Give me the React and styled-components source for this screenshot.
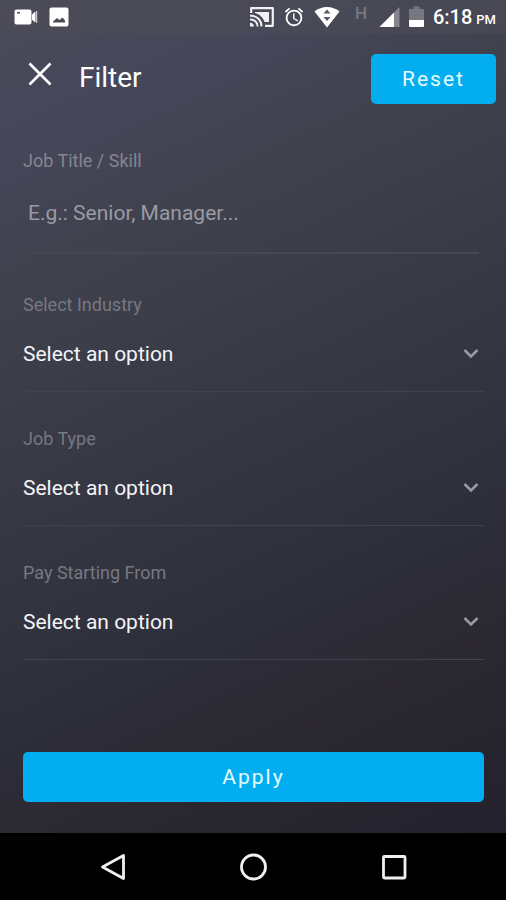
import { useState } from "react";
import styled, { createGlobalStyle } from "styled-components";
import { MdAlarm } from "react-icons/md";

const selects = [
  {
    id: "industry",
    label: "Select Industry",
  },
  {
    id: "job-type",
    label: "Job Type",
  },
  {
    id: "pay",
    label: "Pay Starting From",
  },
];

const emptyFilter = { title: "", industry: "", "job-type": "", pay: "" };

const StatusBar = () => {
  return (
    <StatusWrapper>
      <div className="group">
        <svg width="24" height="18" viewBox="0 0 24 18" fill="#fff">
          <path
            fillRule="evenodd"
            d="M2.500 1.500h13a2 2 0 0 1 2 2v11a2 2 0 0 1-2 2h-13a2 2 0 0 1-2-2v-11a2 2 0 0 1 2-2zM3 4v1.600h3V4z"
          />
          <path d="M18 6.500l2.500-2.500h1v10h-1L18 11.500z" />
          <path d="M22 3h1.200v12H22z" opacity="0.7" />
        </svg>
        <svg width="20" height="20" viewBox="0 0 20 20" fill="#fff">
          <path
            fillRule="evenodd"
            d="M2.500 0.500h15a2 2 0 0 1 2 2v15a2 2 0 0 1-2 2h-15a2 2 0 0 1-2-2v-15a2 2 0 0 1 2-2zM4 15.500h12v-2l-2.500-3-3 2.500-2.500-2-4 3.500z"
          />
        </svg>
      </div>
      <div className="group right">
        <svg width="24" height="20" viewBox="0 0 24 20" fill="none" stroke="#f0f0f2">
          <path d="M1.200 6V1.200h21.600v17.600H15" strokeWidth="2.200" strokeLinejoin="round" />
          <path d="M5 5h14v10h-4.500C13 10.500 9.500 7 5 6z" fill="#f0f0f2" stroke="none" />
          <path d="M0 8.800A10.500 10.500 0 0 1 11.500 19.500M0 12.600A6.800 6.800 0 0 1 7.600 19.500" strokeWidth="1.900" />
          <path d="M0 15.800a4 4 0 0 1 4 3.700H0z" fill="#f0f0f2" stroke="none" />
        </svg>
        <MdAlarm size={22} />
        <svg width="26" height="22" viewBox="0 0 26 22">
          <path d="M0.500 5.500C4 2.500 8.500 1 13 1s9 1.500 12.500 4.500L13 21.500z" fill="#fff" />
          <path d="M13 3.500l3.500 4h-7zM9.500 11h7L13 15z" fill="#5a5a64" />
        </svg>
        <Network>H</Network>
        <svg width="21" height="22" viewBox="0 0 21 22">
          <path d="M20.500 1v20H0.500z" fill="#85858e" />
          <path d="M15 6.500V21H0.500z" fill="#fff" />
        </svg>
        <svg width="15" height="22" viewBox="0 0 15 22">
          <path d="M4.500 0.500h6v2.500H15v11H0V3h4.500z" fill="#777780" />
          <path d="M0 14h15v6a1 1 0 0 1-1 1H1a1 1 0 0 1-1-1z" fill="#fff" />
        </svg>
        <Clock>
          6:18<small>PM</small>
        </Clock>
      </div>
    </StatusWrapper>
  );
};

const NavBar = () => {
  return (
    <NavWrapper>
      <button aria-label="Back">
        <svg width="28" height="28" viewBox="0 0 28 28">
          <path d="M25.500 2.500v23L4.500 14z" />
        </svg>
      </button>
      <button aria-label="Home">
        <svg width="28" height="28" viewBox="0 0 28 28">
          <circle cx="14.500" cy="14" r="12" />
        </svg>
      </button>
      <button aria-label="Recent apps">
        <svg width="28" height="28" viewBox="0 0 28 28">
          <rect x="3.500" y="3.500" width="21.500" height="21.500" rx="1" />
        </svg>
      </button>
    </NavWrapper>
  );
};

const App = () => {
  const [filter, setFilter] = useState(emptyFilter);

  const handleChange = (e) => {
    setFilter({ ...filter, [e.target.name]: e.target.value });
  };

  return (
    <>
      <GlobalStyle />
      <Screen>
        <StatusBar />
        <Header>
          <CloseButton aria-label="Close">
            <svg width="24" height="24" viewBox="0 0 24 24">
              <path d="M1.500 1.500l21 21M22.500 1.500l-21 21" />
            </svg>
          </CloseButton>
          <h1>Filter</h1>
          <Button type="button" onClick={() => setFilter(emptyFilter)}>
            Reset
          </Button>
        </Header>
        <Form onSubmit={(e) => e.preventDefault()}>
          <Field>
            <Label htmlFor="title">Job Title / Skill</Label>
            <TextInput
              id="title"
              name="title"
              type="text"
              placeholder="E.g.: Senior, Manager..."
              value={filter.title}
              onChange={handleChange}
            />
          </Field>
          {selects.map(({ id, label }) => (
            <Field key={id}>
              <Label $dim htmlFor={id}>
                {label}
              </Label>
              <SelectBox>
                <select
                  id={id}
                  name={id}
                  value={filter[id]}
                  onChange={handleChange}
                >
                  <option value="">Select an option</option>
                </select>
                <svg width="16" height="12" viewBox="0 0 16 12">
                  <path d="M1.500 2l6.500 6.500L14.500 2" />
                </svg>
              </SelectBox>
            </Field>
          ))}
          <Button type="submit" $wide>
            Apply
          </Button>
        </Form>
        <NavBar />
      </Screen>
    </>
  );
};

const GlobalStyle = createGlobalStyle`
  * {
    box-sizing: border-box;
  }
  body {
    margin: 0;
    background: #000;
  }
  body, button, input, select {
    font-family: Roboto, "Liberation Sans", sans-serif;
  }
`;

const Screen = styled.div`
  min-height: 100vh;
  display: flex;
  flex-direction: column;
  color: #fff;
  background: linear-gradient(
    155deg,
    #4a4a59 0%,
    #454659 14%,
    #3f414c 27%,
    #363844 45%,
    #2e303c 62%,
    #2b2831 76%,
    #211f2b 100%
  );
`;

const StatusWrapper = styled.div`
  height: 34px;
  padding: 0 10px 0 14px;
  display: flex;
  align-items: center;
  justify-content: space-between;
  background: rgba(80, 79, 84, 0.4);
  .group {
    display: flex;
    align-items: center;
    gap: 11px;
  }
  .right {
    gap: 9px;
  }
`;

const Network = styled.span`
  align-self: flex-start;
  margin: 0 3px 0 6px;
  font-size: 17px;
  line-height: 17px;
  font-weight: 500;
  color: #777780;
`;

const Clock = styled.span`
  font-size: 20px;
  font-weight: 500;
  white-space: nowrap;
  small {
    margin-left: 4px;
    font-size: 13px;
  }
`;

const Header = styled.header`
  display: flex;
  align-items: center;
  padding: 20px 10px 0 28px;
  h1 {
    flex: 1;
    margin: 0 0 2px 27px;
    font-size: 28px;
    line-height: 32px;
    font-weight: 400;
  }
`;

const CloseButton = styled.button`
  display: flex;
  margin: 0 0 10px;
  padding: 0;
  border: none;
  background: transparent;
  cursor: pointer;
  path {
    stroke: #fff;
    stroke-width: 2.6;
  }
`;

const Button = styled.button`
  width: ${({ $wide }) => ($wide ? "100%" : "125px")};
  height: 50px;
  margin-top: ${({ $wide }) => ($wide ? "auto" : "0")};
  padding: 0;
  border: none;
  border-radius: 5px;
  background: #03aef0;
  color: #e6fbff;
  font-size: 21px;
  letter-spacing: 2px;
  cursor: pointer;
`;

const Form = styled.form`
  flex: 1;
  display: flex;
  flex-direction: column;
  gap: 35px;
  padding: 45px 22px 31px 23px;
`;

const Field = styled.div`
  display: flex;
  flex-direction: column;
`;

const Label = styled.label`
  font-size: 18px;
  line-height: 24px;
  color: ${({ $dim }) => ($dim ? "#777882" : "#858591")};
`;

const TextInput = styled.input`
  height: 81px;
  margin: 0 5px 4px;
  padding: 0;
  border: none;
  border-bottom: 2px solid #464752;
  outline: none;
  background: transparent;
  color: #fff;
  font-size: 21px;
  &::placeholder {
    color: #9a9aa5;
    opacity: 1;
  }
`;

const SelectBox = styled.div`
  display: grid;
  align-items: center;
  border-bottom: 1px solid #41424d;
  select,
  svg {
    grid-area: 1 / 1;
  }
  select {
    appearance: none;
    width: 100%;
    height: 74px;
    padding: 0;
    border: none;
    outline: none;
    background: transparent;
    color: #f4f4f8;
    font-size: 21px;
  }
  option {
    color: #222;
  }
  svg {
    justify-self: end;
    margin-right: 5px;
    pointer-events: none;
    fill: none;
    stroke: #9899a5;
    stroke-width: 2.6;
  }
`;

const NavWrapper = styled.nav`
  display: flex;
  height: 67px;
  padding: 0 42px;
  background: #000;
  button {
    flex: 1;
    display: flex;
    align-items: center;
    justify-content: center;
    padding: 0;
    border: none;
    background: transparent;
    cursor: pointer;
  }
  svg {
    fill: none;
    stroke: #f0f0f0;
    stroke-width: 2.8;
    stroke-linejoin: round;
  }
`;

export default App;
